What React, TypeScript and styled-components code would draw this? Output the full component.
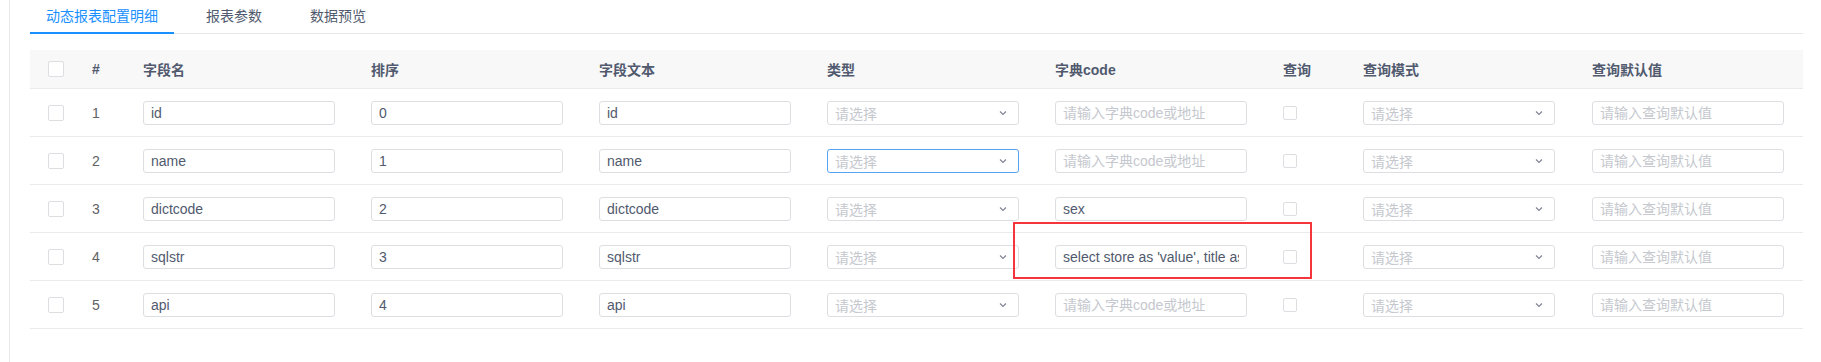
import styled, { createGlobalStyle } from 'styled-components'

const GlobalStyle = createGlobalStyle`
  html, body {
    margin: 0;
    padding: 0;
    background: #fff;
  }
  body {
    font-family: "Liberation Sans", "Noto Sans CJK SC", sans-serif;
    font-size: 14px;
    color: #515a6e;
  }
`

type Row = {
  name: string
  order: string
  text: string
  dict: string
  focused?: boolean
}

const rows: Row[] = [
  { name: 'id', order: '0', text: 'id', dict: '' },
  { name: 'name', order: '1', text: 'name', dict: '', focused: true },
  { name: 'dictcode', order: '2', text: 'dictcode', dict: 'sex' },
  {
    name: 'sqlstr',
    order: '3',
    text: 'sqlstr',
    dict: "select store as 'value', title as 'text' from jeecg_order",
  },
  { name: 'api', order: '4', text: 'api', dict: '' },
]

const headers = ['字段名', '排序', '字段文本', '类型', '字典code', '查询', '查询模式', '查询默认值']

function Chevron() {
  return (
    <svg width="10" height="10" viewBox="0 0 10 10">
      <polyline points="2,3.5 5,6.5 8,3.5" fill="none" stroke="#808695" strokeWidth="1.2" />
    </svg>
  )
}

function Select({ focused }: { focused?: boolean }) {
  return (
    <SelectBox $focused={focused}>
      <Placeholder>请选择</Placeholder>
      <Chevron />
    </SelectBox>
  )
}

function App() {
  return (
    <Page>
      <GlobalStyle />
      <Panel>
        <TabBar>
          <Tab $active>动态报表配置明细</Tab>
          <Tab>报表参数</Tab>
          <Tab>数据预览</Tab>
        </TabBar>
        <Table>
          <HeadRow>
            <CheckCell>
              <Check $size={16} />
            </CheckCell>
            <HeadCell>#</HeadCell>
            {headers.map((h) => (
              <HeadCell key={h}>{h}</HeadCell>
            ))}
          </HeadRow>
          {rows.map((r, i) => (
            <BodyRow key={r.name}>
              <CheckCell>
                <Check $size={16} />
              </CheckCell>
              <Cell>{i + 1}</Cell>
              <Cell>
                <Input defaultValue={r.name} />
              </Cell>
              <Cell>
                <Input defaultValue={r.order} />
              </Cell>
              <Cell>
                <Input defaultValue={r.text} />
              </Cell>
              <Cell>
                <Select focused={r.focused} />
              </Cell>
              <Cell>
                <Input defaultValue={r.dict} placeholder="请输入字典code或地址" />
              </Cell>
              <Cell>
                <Check $size={14} />
              </Cell>
              <Cell>
                <Select />
              </Cell>
              <Cell>
                <Input placeholder="请输入查询默认值" />
              </Cell>
            </BodyRow>
          ))}
          <Marker />
        </Table>
      </Panel>
    </Page>
  )
}

export default App

const Page = styled.div`
  width: 1821px;
  height: 362px;
  padding-left: 9px;
  box-sizing: border-box;
  overflow: hidden;
`
const Panel = styled.div`
  height: 100%;
  border-left: 1px solid #e8e8e8;
  padding: 0 18px 0 20px;
  box-sizing: border-box;
`
const TabBar = styled.div`
  display: flex;
  gap: 16px;
  height: 34px;
  border-bottom: 1px solid #e8e8e8;
  box-sizing: border-box;
`
const Tab = styled.div<{ $active?: boolean }>`
  height: 34px;
  box-sizing: border-box;
  padding: 0 16px;
  line-height: 32px;
  font-size: 14px;
  color: ${(p) => (p.$active ? '#1890ff' : '#515a6e')};
  border-bottom: 2px solid ${(p) => (p.$active ? '#1890ff' : 'transparent')};
`
const Table = styled.div`
  position: relative;
  margin-top: 16px;
`
const gridCols = '52px 51px repeat(5, 228px) 80px 229px 220px'
const HeadRow = styled.div`
  display: grid;
  grid-template-columns: ${gridCols};
  height: 39px;
  box-sizing: border-box;
  background: #f8f8f9;
  border-bottom: 1px solid #e8eaec;
`
const BodyRow = styled.div`
  display: grid;
  grid-template-columns: ${gridCols};
  height: 48px;
  box-sizing: border-box;
  border-bottom: 1px solid #e8eaec;
`
const Cell = styled.div`
  display: flex;
  align-items: center;
  padding: 0 10px;
  color: #606266;
  font-size: 14px;
`
const HeadCell = styled(Cell)`
  font-weight: bold;
  color: #515a6e;
`
const CheckCell = styled(Cell)`
  justify-content: center;
  padding: 0;
`
const Check = styled.span<{ $size: number }>`
  display: inline-block;
  width: ${(p) => p.$size}px;
  height: ${(p) => p.$size}px;
  box-sizing: border-box;
  border: 1px solid #dcdee2;
  border-radius: 2px;
  background: #fff;
`
const Input = styled.input`
  width: 192px;
  height: 24px;
  box-sizing: border-box;
  border: 1px solid #dcdee2;
  border-radius: 3px;
  padding: 0 7px;
  font-family: "Liberation Sans", "Noto Sans CJK SC", sans-serif;
  font-size: 14px;
  color: #515a6e;
  background: #fff;
  outline: none;
  &::placeholder {
    color: #c5c8ce;
  }
`
const SelectBox = styled.div<{ $focused?: boolean }>`
  width: 192px;
  height: 24px;
  box-sizing: border-box;
  border: 1px solid ${(p) => (p.$focused ? '#57a3f3' : '#dcdee2')};
  border-radius: 3px;
  padding: 0 10px 0 7px;
  display: flex;
  align-items: center;
  justify-content: space-between;
  background: #fff;
`
const Placeholder = styled.span`
  color: #c5c8ce;
  font-size: 14px;
`
const Marker = styled.div`
  position: absolute;
  left: 983px;
  top: 172px;
  width: 299px;
  height: 57px;
  box-sizing: border-box;
  border: 2px solid #f5353b;
  pointer-events: none;
`
